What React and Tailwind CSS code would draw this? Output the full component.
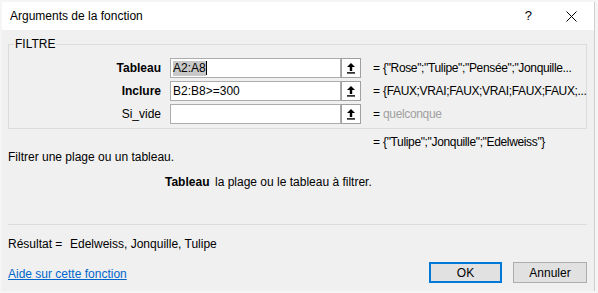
import React from 'react';

const font = { fontFamily: '"Liberation Sans", Arial, sans-serif' };

function RefButton() {
    return (
        <div className="shrink-0 w-[20px] h-[20px] border border-[#a0a0a0] bg-white flex items-center justify-center">
            <svg width="10" height="12" viewBox="0 0 10 12">
                <path d="M5 1 L9 5 L6.2 5 L6.2 9 L3.8 9 L3.8 5 L1 5 Z" fill="#000" />
                <rect x="1" y="10.2" width="8" height="1.4" fill="#000" />
            </svg>
        </div>
    );
}

function ArgRow({ label, bold, value, children, result, muted }) {
    return (
        <div className="flex items-center h-[20px]">
            <div className={`shrink-0 w-[152px] text-right text-[12px] text-black ${bold ? 'font-bold' : ''}`}>{label}</div>
            <div className="shrink-0 ml-[9px] w-[171px] h-[20px] border border-[#adadad] bg-white flex items-center pl-[2px] text-[12px] text-black">
                {children || value}
            </div>
            <RefButton />
            <div className="shrink-0 ml-[12px] w-[10px] text-[12px] text-black">=</div>
            <div className={`min-w-0 text-[12px] tracking-[-0.35px] whitespace-nowrap ${muted ? 'text-[#a0a0a0]' : 'text-black'}`}>{result}</div>
        </div>
    );
}

export default function App() {
    return (
        <div className="w-[598px] h-[293px] bg-[#f5f5f5] pt-[2px] pl-[2px] pr-[3px] pb-[2px]" style={font}>
            <div className="h-full flex flex-col bg-[#f0f0f0] border-r border-[#cfcfcf]">
                {/* Title bar */}
                <div className="h-[28px] bg-white flex items-center pl-[8px] pr-[17px]">
                    <div className="text-[12px] text-black flex-1">Arguments de la fonction</div>
                    <div className="text-[13px] text-black mr-[34px]">?</div>
                    <svg width="11" height="11" viewBox="0 0 11 11">
                        <path d="M0.5 0.5 L10.5 10.5 M10.5 0.5 L0.5 10.5" stroke="#000" strokeWidth="1" />
                    </svg>
                </div>

                <div className="flex flex-col pl-[6px] pr-[7px]">
                    {/* Group box */}
                    <div className="relative mt-[14px] border border-[#dcdcdc] pt-[13px] pb-[4px] flex flex-col gap-[3px]">
                        <div className="absolute left-[5px] top-[-8px] bg-[#f0f0f0] px-[1px] text-[12px] leading-[14px] text-black">FILTRE</div>
                        <ArgRow label="Tableau" bold result={'{"Rose";"Tulipe";"Pensée";"Jonquille...'}>
                            <span className="bg-[#c8c8c8] leading-[15px]">A2:A8</span>
                            <span className="w-px h-[14px] bg-black" />
                        </ArgRow>
                        <ArgRow label="Inclure" bold value="B2:B8>=300" result="{FAUX;VRAI;FAUX;VRAI;FAUX;FAUX;..." />
                        <ArgRow label="Si_vide" value="" result="quelconque" muted />
                    </div>

                    {/* Formula result */}
                    <div className="flex items-center h-[15px] mt-[5px] text-[12px] text-black">
                        <div className="ml-[365px] w-[10px]">=</div>
                        <div className="tracking-[-0.35px]">{'{"Tulipe";"Jonquille";"Edelweiss"}'}</div>
                    </div>

                    <div className="h-[16px] flex items-center text-[12px] text-black">Filtrer une plage ou un tableau.</div>

                    <div className="mt-[9px] h-[16px] flex items-center text-[12px] text-black">
                        <span className="ml-[157px] w-[50px] font-bold">Tableau</span>
                        <span>la plage ou le tableau à filtrer.</span>
                    </div>

                    <div className="mt-[34px] h-px bg-[#dcdcdc]" />

                    <div className="mt-[11px] h-[16px] flex items-center text-[12px] text-black">
                        <span className="w-[62px]">Résultat =</span>
                        <span>Edelweiss, Jonquille, Tulipe</span>
                    </div>

                    <div className="mt-[10px] flex items-center">
                        <a className="flex-1 text-[12px] text-[#0066cc] underline mt-[2px]">Aide sur cette fonction</a>
                        <button className="w-[73px] h-[21px] border-2 border-[#0078d7] bg-[#e1e1e1] text-[12px] text-black">OK</button>
                        <button className="ml-[11px] w-[74px] h-[21px] border border-[#adadad] bg-[#e1e1e1] text-[12px] text-black">Annuler</button>
                    </div>
                </div>
            </div>
        </div>
    );
}
